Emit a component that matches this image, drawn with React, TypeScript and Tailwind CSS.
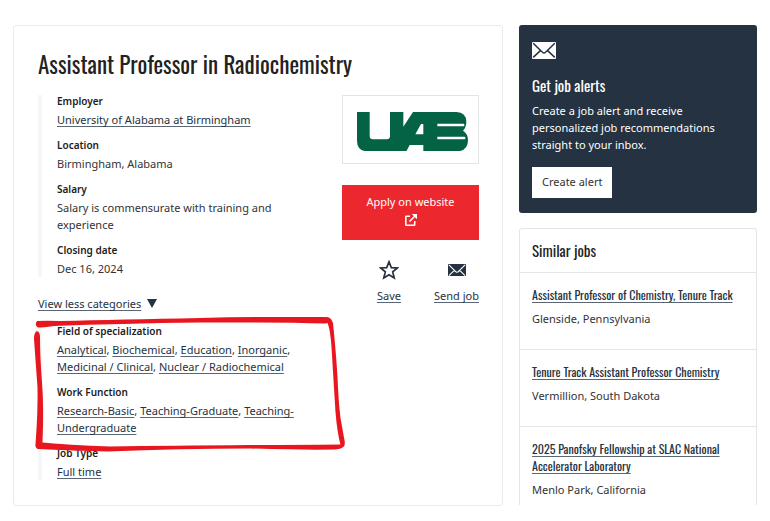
import { Fragment, type ReactNode } from "react";

const linkClass =
  "text-[#253241] underline decoration-[#5b6675] decoration-1 underline-offset-2 [text-decoration-skip-ink:none] hover:no-underline";

type Field = {
  label: string;
  text?: string;
  links?: string[];
};

const details: Field[] = [
  { label: "Employer", links: ["University of Alabama at Birmingham"] },
  { label: "Location", text: "Birmingham, Alabama" },
  { label: "Salary", text: "Salary is commensurate with training and experience" },
  { label: "Closing date", text: "Dec 16, 2024" },
];

const categories: Field[] = [
  {
    label: "Field of specialization",
    links: [
      "Analytical",
      "Biochemical",
      "Education",
      "Inorganic",
      "Medicinal / Clinical",
      "Nuclear / Radiochemical",
    ],
  },
  {
    label: "Work Function",
    links: ["Research-Basic", "Teaching-Graduate", "Teaching-Undergraduate"],
  },
  { label: "Job Type", links: ["Full time"] },
];

const similarJobs = [
  { title: "Assistant Professor of Chemistry, Tenure Track", place: "Glenside, Pennsylvania" },
  { title: "Tenure Track Assistant Professor Chemistry", place: "Vermillion, South Dakota" },
  {
    title: "2025 Panofsky Fellowship at SLAC National Accelerator Laboratory",
    place: "Menlo Park, California",
  },
];

function Envelope({ className }: { className: string }) {
  return (
    <svg viewBox="0 0 24 17" className={className} fill="none" aria-hidden="true">
      <rect width="24" height="17" rx="1" fill="currentColor" />
      <path
        d="M1.2 1.2 9.6 9.4Q12 12.6 14.4 9.4L22.8 1.2M1.2 15.4 8.4 8.6M22.8 15.4 15.6 8.6"
        className="stroke-(--fold)"
        strokeWidth="1.5"
      />
    </svg>
  );
}

function UabLogo() {
  return (
    <svg viewBox="322 304 333 118" className="w-[111px]" role="img" aria-label="UAB">
      <path
        fill="#046344"
        fillRule="evenodd"
        d="M322 304H360V376Q360 386 370 386H411Q421 386 421 376V304H461V348L490 304H620Q650 306 650 333Q650 350 640 360Q655 370 655 388Q655 420 624 422H521V403H480L470 422H352Q322 420 322 390ZM514 340H521V371H497ZM563 339H642Q647 343 642 347H563ZM563 378H645Q650 382 645 386H563Z"
      />
    </svg>
  );
}

function FieldList({ fields, children }: { fields: Field[]; children?: ReactNode }) {
  return (
    <div className="relative border-l-4 border-[#f6f6f6] pl-[15px]">
      <dl className="space-y-[11px]">
        {fields.map(({ label, text, links }) => (
          <div key={label}>
            <dt className="mb-1 text-[10px] leading-3 font-semibold text-[#1c1c1c]">{label}</dt>
            <dd className="leading-[17px]">
              {text}
              {links?.map((link, i) => (
                <Fragment key={link}>
                  {i > 0 && ", "}
                  <a href="#" className={linkClass}>
                    {link}
                  </a>
                </Fragment>
              ))}
            </dd>
          </div>
        ))}
      </dl>
      {children}
    </div>
  );
}

/** Red marker frame around the category fields. */
function MarkerFrame() {
  return (
    <svg
      viewBox="34 312 312 138"
      className="pointer-events-none absolute -top-[11px] -left-2 h-[138px] w-[312px]"
      fill="#e8171f"
      aria-hidden="true"
    >
      <path d="M37 319Q34 323 38 325.5Q42 325.5 54 324Q120 321.5 200 320.5Q280 320 325 321.5Q329 321.5 330 318Q329 314.5 323 315Q260 314.5 200 316Q120 317.5 60 319Q45 318.5 37 319Z" />
      <path d="M37 329Q34 330 34 337Q36 365 37.5 385Q38 410 35.5 442Q35 446 38 447Q42 446 42.5 440Q44 405 42 380Q40 355 40 335Q40 330 37 329Z" />
      <path d="M37 440Q34 444 38 447Q70 448.5 108 449.5Q180 446.5 250 446.5Q300 448 335 447.5Q343 447 344.5 443Q343 441 340 442.5Q300 443 250 443Q170 443.5 110 444.5Q70 443 37 440Z" />
      <path d="M326 315Q331 314.5 333 321Q336 350 337.5 375Q338.5 400 340.5 416Q343 430 344.8 440Q345 446 341 445Q337 430 335.5 410Q333 370 331.5 345Q330 325 327 320Z" />
    </svg>
  );
}

export default function App() {
  return (
    <div className="flex items-start gap-4 bg-white px-[13px] pt-[25px] font-['Noto_Sans',sans-serif] text-[11px] text-[#333]">
      <main className="min-w-0 flex-1 rounded-[3px] border border-[#ebebeb] pt-6 pr-[23px] pb-[25px] pl-6">
        <h1 className="font-['Oswald','Roboto_Condensed',sans-serif] text-[23px] leading-7 text-[#222]">
          Assistant Professor in Radiochemistry
        </h1>
        <div className="mt-[17px] flex items-start justify-between">
          <div className="w-[274px]">
            <FieldList fields={details} />
            <button type="button" className="mt-[18px] mb-[13px] flex items-center gap-[6px] leading-[17px]">
              <span className={linkClass}>View less categories</span>
              <svg viewBox="0 0 10 9" className="w-[10px]" fill="#253241" aria-hidden="true">
                <path d="M0 0H10L5 9Z" />
              </svg>
            </button>
            <FieldList fields={categories}>
              <MarkerFrame />
            </FieldList>
          </div>

          <div className="w-[137px]">
            <div className="flex h-[69px] items-center justify-center border border-[#e2e5e6] pt-1 pl-1">
              <UabLogo />
            </div>
            <a
              href="#"
              className="mt-[21px] flex h-[55px] flex-col items-center bg-[#ed272e] pt-2 leading-[18px] text-white"
            >
              Apply on website
              <svg
                viewBox="0 0 12 12"
                className="mt-[3px] w-3"
                fill="none"
                stroke="currentColor"
                strokeWidth="1.6"
                aria-hidden="true"
              >
                <path d="M5 2.3H1.3Q.8 2.3.8 2.8V10.7Q.8 11.2 1.3 11.2H9.2Q9.7 11.2 9.7 10.7V7M4.5 7.5 10 2" />
                <path d="M6.8 0H12V5.2Z" fill="currentColor" stroke="none" />
              </svg>
            </a>
            <div className="mt-5 flex justify-between pl-[35px] leading-4">
              <button type="button" className="flex flex-col items-center">
                <svg
                  viewBox="0 0 20 20"
                  className="mb-2 w-5"
                  fill="none"
                  stroke="#253241"
                  strokeWidth="1.7"
                  aria-hidden="true"
                >
                  <path d="M10 1.8 12.3 7.6 18.3 8 13.7 11.9 15.2 18 10 14.7 4.8 18 6.3 11.9 1.7 8 7.7 7.6Z" />
                </svg>
                <span className={linkClass}>Save</span>
              </button>
              <button type="button" className="flex flex-col items-center">
                <span className="mb-2 flex h-5 items-center text-[#253241]">
                  <Envelope className="w-[18px] [--fold:white]" />
                </span>
                <span className={linkClass}>Send job</span>
              </button>
            </div>
          </div>
        </div>
      </main>

      <aside className="w-[238px]">
        <section className="rounded-[3px] bg-[#253241] px-[13px] pt-[17px] pb-[15px] text-white">
          <Envelope className="w-6 [--fold:#253241]" />
          <h2 className="mt-4 font-['Oswald','Roboto_Condensed',sans-serif] text-[15px] leading-5">
            Get job alerts
          </h2>
          <p className="mt-[7px] leading-[17px]">
            Create a job alert and receive personalized job recommendations straight to your inbox.
          </p>
          <button type="button" className="mt-[14px] h-[31px] bg-white px-[10px] text-[#333]">
            Create alert
          </button>
        </section>

        <section className="mt-[15px] rounded-t-[3px] border border-b-0 border-[#e4e6e6]">
          <h2 className="px-3 py-3 font-['Oswald','Roboto_Condensed',sans-serif] text-[15px] leading-[19px] text-[#222]">
            Similar jobs
          </h2>
          <ul>
            {similarJobs.map(({ title, place }) => (
              <li
                key={title}
                className="border-t border-[#e4e6e6] px-3 pt-[13px] pb-[22px] last:pb-[7px]"
              >
                <h3 className="font-['Oswald','Roboto_Condensed',sans-serif] text-[12px] leading-[17px]">
                  <a href="#" className={linkClass}>
                    {title}
                  </a>
                </h3>
                <p className="mt-[7px] leading-[17px]">{place}</p>
              </li>
            ))}
          </ul>
        </section>
      </aside>
    </div>
  );
}
